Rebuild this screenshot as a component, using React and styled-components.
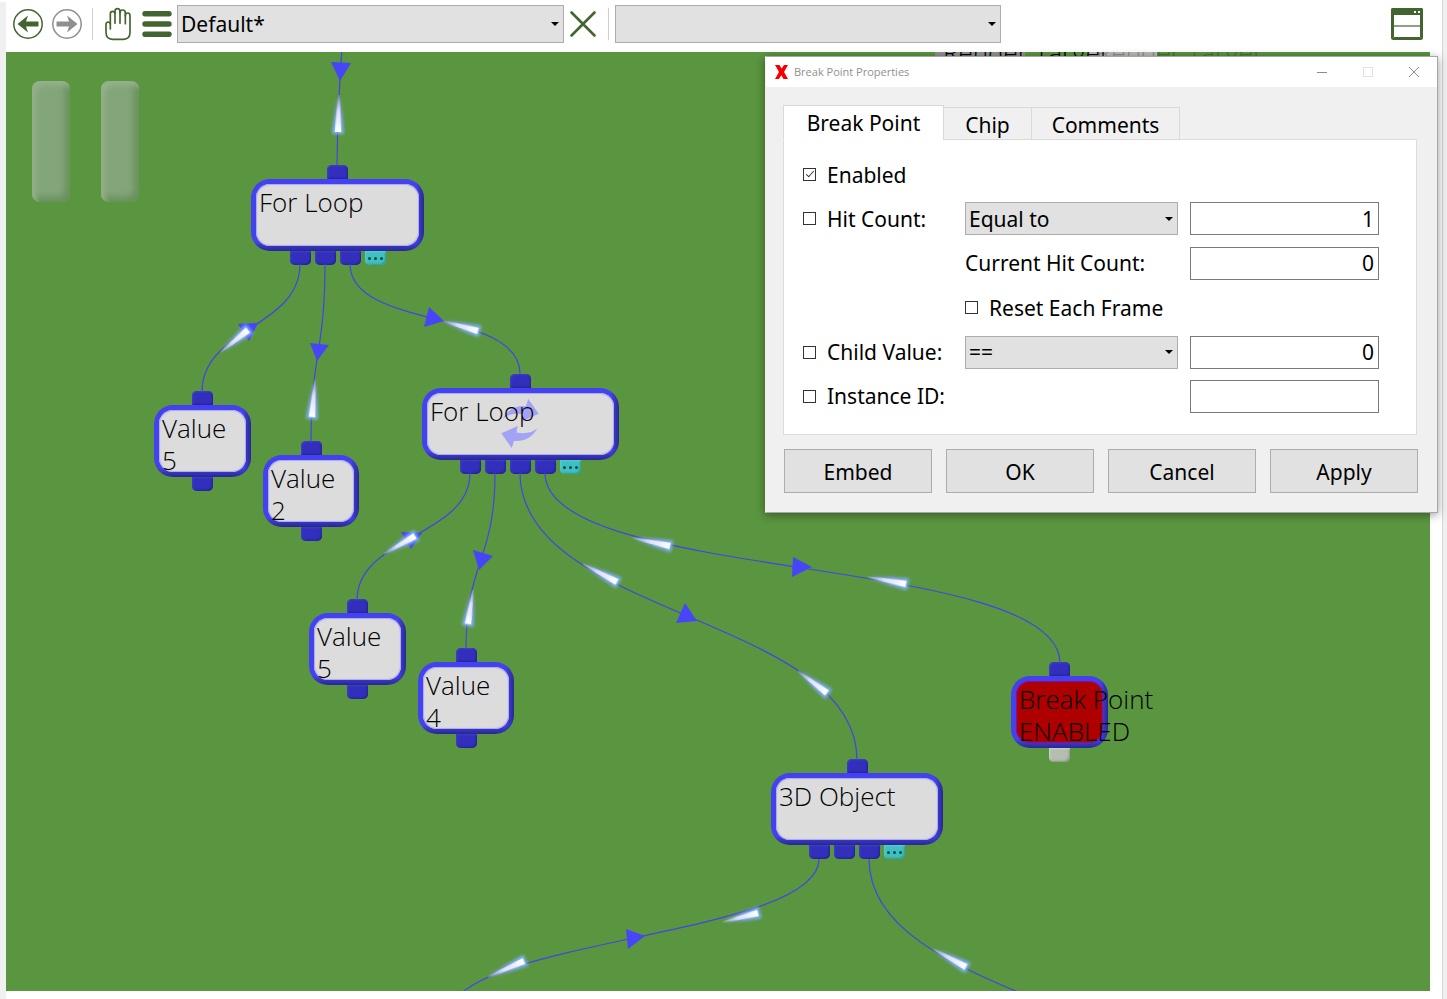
import React from "react";
import styled, { createGlobalStyle } from "styled-components";

const uiFont = `"Noto Sans", Tahoma, "DejaVu Sans Condensed", sans-serif`;
const nodeFont = `"Segoe UI", "Open Sans", "Noto Sans", sans-serif`;

const GlobalStyle = createGlobalStyle`
  *, *::before, *::after { box-sizing: border-box; }
  body { margin: 0; background: #fff; color: #000; font-family: ${uiFont}; }
`;

/* ---------- page frame ---------- */

const Page = styled.div`
  display: flex;
  min-height: 100vh;
  position: relative;
  overflow: hidden;
`;
const LeftEdge = styled.div`
  flex: none;
  width: 6px;
  margin-top: 2px;
  background: #f0f0f0;
`;
const RightEdge = styled.div`
  flex: none;
  width: 5px;
  border-left: 1px solid #d4d4d4;
  background: #f0f0f0;
`;
const Workspace = styled.main`
  flex: 1;
  min-width: 0;
  display: flex;
  flex-direction: column;
  padding: 0 12px 8px 0;
`;

/* ---------- toolbar ---------- */

const Toolbar = styled.header`
  flex: none;
  display: flex;
  align-items: center;
  height: 52px;
  padding: 0 7px 4px 6px;
`;
const IconButton = styled.button`
  flex: none;
  display: flex;
  align-items: center;
  justify-content: center;
  width: ${(p) => p.$width}px;
  height: 40px;
  padding: 0;
  border: 0;
  background: none;
  color: ${(p) => (p.$muted ? "#8f8f8f" : "#42642f")};
`;
const IconPair = styled.div`
  display: flex;
  gap: 4px;
`;
const Divider = styled.span`
  flex: none;
  width: 1px;
  height: 32px;
  margin: 0 ${(p) => p.$gapRight}px 0 ${(p) => p.$gapLeft}px;
  background: #d0d0d0;
`;
const Spacer = styled.div`
  flex: 1;
`;
const SelectBox = styled.div`
  position: relative;
  width: ${(p) => p.$width};
  height: ${(p) => p.$height}px;
`;
const NativeSelect = styled.select`
  appearance: none;
  display: block;
  width: 100%;
  height: 100%;
  padding: 0 24px 0 3px;
  border: 1px solid #adadad;
  border-radius: 0;
  background: #e1e1e1;
  color: #000;
  font: 21px ${uiFont};
`;
const SelectArrow = styled.svg`
  position: absolute;
  right: 5px;
  top: 50%;
  margin-top: -2px;
  pointer-events: none;
`;

function Select({ width, height, label, options }) {
  return (
    <SelectBox $width={width} $height={height}>
      <NativeSelect aria-label={label}>
        {options.map((o) => (
          <option key={o}>{o}</option>
        ))}
      </NativeSelect>
      <SelectArrow width="8" height="4" viewBox="0 0 8 4">
        <path d="M0 0H8L4 4Z" fill="#000" />
      </SelectArrow>
    </SelectBox>
  );
}

const CircleArrow = ({ flip }) => (
  <svg width="32" height="32" viewBox="0 0 32 32">
    <circle cx="16" cy="16" r="14.2" fill="none" stroke="currentColor" strokeWidth="1.5" />
    <path
      transform={flip ? "matrix(-1 0 0 1 32 0)" : undefined}
      d="M5.500 16L16 7.500L14 13.500H26.500V18.500H14L16 24.500Z"
      fill="currentColor"
    />
  </svg>
);
const HandIcon = () => (
  <svg width="28" height="34" viewBox="312 21 84 102" fill="none" stroke="currentColor" strokeWidth="5" strokeLinecap="round" strokeLinejoin="round">
    <path d="M331 87V73Q331 66 324.500 66Q318 66 318 74V97Q318 118 338 118H370Q390 118 390 97V47Q390 39 383 39Q376 39 376 46V71" />
    <path d="M331 72V41Q331 34 338 34Q345 34 345 41V70" />
    <path d="M345 40V34Q345 26 352.500 26Q360 26 360 34V70" />
    <path d="M360 38Q360 30 368 30Q376 30 376 38V48" />
  </svg>
);
const MenuIcon = () => (
  <svg width="30" height="28" viewBox="0 0 30 28" stroke="currentColor" strokeWidth="5.400" strokeLinecap="round">
    <path d="M3 3.700H27M3 14H27M3 24.300H27" />
  </svg>
);
const CrossIcon = () => (
  <svg width="28" height="28" viewBox="0 0 28 28" stroke="currentColor" strokeWidth="2.600" strokeLinecap="round">
    <path d="M2.500 2.500L25.500 25.500M25.500 2.500L2.500 25.500" />
  </svg>
);
const WindowIcon = () => (
  <svg width="32" height="32" viewBox="0 0 32 32">
    <rect x="1" y="1" width="30" height="30" rx="1.500" fill="#fff" stroke="currentColor" strokeWidth="2" />
    <rect x="0" y="0" width="32" height="7" rx="1.500" fill="currentColor" />
    <path d="M2.500 7V29.500H29.500V7" fill="none" stroke="currentColor" strokeWidth="1" />
    <path d="M3 18H29" stroke="#8ba37f" strokeWidth="2" />
    <path d="M23 3h2v2h-2zM27 3h2v2h-2z" fill="#fff" />
  </svg>
);

/* ---------- graph canvas ---------- */

const Canvas = styled.section`
  position: relative;
  flex: 1;
  overflow: hidden;
  background: #5a953f;
`;
const Wires = styled.svg`
  position: absolute;
  inset: 0;
  width: 100%;
  height: 100%;
`;
const PauseMark = styled.div`
  position: absolute;
  left: 26px;
  top: 29px;
  display: flex;
  gap: 31px;
`;
const PauseBar = styled.span`
  width: 38px;
  height: 121px;
  border-radius: 8px;
  background: #83a57a;
  box-shadow: inset 4px 5px 5px #94b089, inset -5px -5px 6px #69915c;
`;
const Node = styled.div`
  position: absolute;
  left: ${(p) => p.$x}px;
  top: ${(p) => p.$y}px;
  width: ${(p) => p.$width}px;
  display: flex;
  flex-direction: column;
  align-items: center;
`;
const portTones = {
  blue: ["#322fbd", "#4040c8", "#23238c"],
  teal: ["#3fbfc0", "#55d0d0", "#2e9796"],
  gray: ["#b4bdb0", "#ccd2c8", "#86947f"],
};
const Port = styled.span`
  display: flex;
  align-items: center;
  justify-content: center;
  gap: 3px;
  width: 21px;
  height: 14px;
  border-radius: ${(p) => (p.$top ? "5px 5px 0 0" : "0 0 5px 5px")};
  background: ${(p) => portTones[p.$tone][0]};
  box-shadow: inset 1px 1px 2px ${(p) => portTones[p.$tone][1]},
    inset -1px -1px 2px ${(p) => portTones[p.$tone][2]};
`;
const Dot = styled.i`
  width: 3px;
  height: 3px;
  border-radius: 50%;
  background: #0c4a50;
`;
const PortRow = styled.div`
  display: flex;
  gap: 4px;
`;
const bodyTones = {
  normal: ["#dcdcdc", "#a9a9ee"],
  alert: ["#ae0000", "#8a10a0"],
};
const NodeBody = styled.div`
  position: relative;
  width: 100%;
  height: 72px;
  padding: 2px 3px;
  border: 5px solid transparent;
  border-radius: 19px;
  background:
    linear-gradient(${(p) => bodyTones[p.$tone][0]} 0 0) padding-box,
    linear-gradient(to left, #29288f, #2f2eb000 8px) border-box,
    linear-gradient(to top, #29288f, #4442f0 9px) border-box;
  box-shadow: inset 0 0 1px 1px ${(p) => bodyTones[p.$tone][1]};
  font: 300 26px/32px ${nodeFont};
  white-space: pre;
`;
const NodeLabel = styled.span`
  position: relative;
`;
const IdleBody = styled.div`
  width: 100%;
  height: 72px;
  padding: 5px 8px;
  border-radius: 19px 19px 4px 4px;
  background: ${(p) => p.$fill};
  color: ${(p) => p.$ink};
  font: 300 26px/32px ${nodeFont};
  white-space: pre;
`;
const LoopMark = styled.svg`
  position: absolute;
  left: 73px;
  top: 5px;
`;

const nodes = [
  { x: 245, y: 113, width: 173, label: "For Loop", ports: ["blue", "blue", "blue", "teal"] },
  { x: 416, y: 322, width: 197, label: "For Loop", loop: true, ports: ["blue", "blue", "blue", "blue", "teal"] },
  { x: 148, y: 339, width: 97, label: "Value\n5", ports: ["blue"] },
  { x: 257, y: 389, width: 96, label: "Value\n2", ports: ["blue"] },
  { x: 303, y: 547, width: 97, label: "Value\n5", ports: ["blue"] },
  { x: 412, y: 596, width: 96, label: "Value\n4", ports: ["blue"] },
  { x: 1005, y: 610, width: 97, label: "Break Point\nENABLED", tone: "alert", ports: ["gray"] },
  { x: 765, y: 707, width: 172, label: "3D Object", ports: ["blue", "blue", "blue", "teal"] },
];

/* start x, start y, end x, end y, handle length as a share of the drop */
const wires = [
  [338, -77, 331, 113, 0.5],
  [294, 212, 196, 340, 0.5],
  [319, 212, 305, 390, 0.5],
  [344, 212, 514, 322, 0.6],
  [464, 421, 351, 548, 0.5],
  [489, 421, 460, 597, 0.5],
  [514, 421, 851, 708, 0.5],
  [539, 421, 1054, 611, 0.58],
  [813, 807, 442, 965, 0.5],
  [863, 807, 1193, 1087, 0.5],
];
const arrows = [
  "325,10 345,11 334,29",
  "232,272 252,271 243,289",
  "304,291 323,293 311,309",
  "423,255 418,275 438,269",
  "395,480 416,481 405,497",
  "467,498 487,504 473,518",
  "679,551 670,571 691,569",
  "787,505 786,525 806,515",
  "620,877 622,897 639,884",
];
/* tail x, tail y, head x, head y */
const pulses = [
  [333, 43, 332, 80],
  [215, 300, 242, 278],
  [309, 328, 306, 365],
  [437, 269, 472, 279],
  [378, 502, 409, 484],
  [467, 538, 462, 572],
  [627, 486, 664, 494],
  [862, 525, 900, 532],
  [577, 512, 611, 530],
  [792, 619, 821, 641],
  [717, 870, 752, 861],
  [482, 925, 518, 909],
  [927, 897, 960, 915],
];

function Pulse({ tx, ty, hx, hy }) {
  const length = Math.hypot(hx - tx, hy - ty);
  const angle = (Math.atan2(hy - ty, hx - tx) * 180) / Math.PI;
  return (
    <g transform={`translate(${tx} ${ty}) rotate(${angle})`}>
      <path d={`M4 -2L${length + 2} -6V6L4 2Z`} fill="url(#pulseGlow)" filter="url(#soft)" />
      <path d={`M0 -0.700L${length} -3.200V3.200L0 0.700Z`} fill="url(#pulseCore)" filter="url(#edge)" />
    </g>
  );
}

function Graph() {
  return (
    <Canvas aria-label="Chip graph">
      <PauseMark aria-hidden="true">
        <PauseBar />
        <PauseBar />
      </PauseMark>
      <Node $x={1082} $y={-35} $width={69}>
        <Port $top $tone="gray" />
        <IdleBody $fill="#b7bcb5" $ink="rgba(0, 0, 0, 0.250)">Render Target</IdleBody>
      </Node>
      <Node $x={929} $y={-35} $width={90}>
        <Port $top $tone="gray" />
        <IdleBody $fill="#8f938d" $ink="#000">Render Target</IdleBody>
      </Node>
      {nodes.map((n, i) => (
        <Node key={i} $x={n.x} $y={n.y} $width={n.width}>
          <Port $top $tone="blue" />
          <NodeBody $tone={n.tone || "normal"}>
            {n.loop && (
              <LoopMark width="40" height="52" viewBox="0 0 40 52" fill="#a3a2f5">
                <path id="loopHalf" d="M1.300 35.300L17.700 28L16.500 34.500Q30 37 37.300 30.300Q30 44 14 43L11.700 50Z" />
                <use href="#loopHalf" transform="rotate(180 20 25.500)" />
              </LoopMark>
            )}
            <NodeLabel>{n.label}</NodeLabel>
          </NodeBody>
          <PortRow>
            {n.ports.map((tone, j) => (
              <Port key={j} $tone={tone}>
                {tone === "teal" && (
                  <>
                    <Dot />
                    <Dot />
                    <Dot />
                  </>
                )}
              </Port>
            ))}
          </PortRow>
        </Node>
      ))}
      <Wires aria-hidden="true">
        <defs>
          <linearGradient id="pulseCore">
            <stop offset="0" stopColor="#b8c4ff" stopOpacity="0.3" />
            <stop offset="0.4" stopColor="#e0e0ff" stopOpacity="0.950" />
            <stop offset="1" stopColor="#fff" />
          </linearGradient>
          <linearGradient id="pulseGlow">
            <stop offset="0" stopColor="#7f9cf8" stopOpacity="0.3" />
            <stop offset="0.5" stopColor="#7fa4ff" />
            <stop offset="1" stopColor="#7fb4ff" />
          </linearGradient>
          <filter id="soft" x="-30%" y="-150%" width="160%" height="400%" colorInterpolationFilters="sRGB">
            <feGaussianBlur stdDeviation="1.600" />
          </filter>
          <filter id="edge" x="-20%" y="-50%" width="140%" height="200%" colorInterpolationFilters="sRGB">
            <feGaussianBlur stdDeviation="0.500" />
          </filter>
        </defs>
        {wires.map(([x1, y1, x2, y2, share], i) => {
          const handle = (y2 - y1) * share;
          return (
            <path
              key={i}
              d={`M${x1} ${y1}C${x1} ${y1 + handle} ${x2} ${y2 - handle} ${x2} ${y2}`}
              fill="none"
              stroke="#4444e8"
              strokeWidth="1.200"
            />
          );
        })}
        {arrows.map((points) => (
          <polygon key={points} points={points} fill="#4646f8" />
        ))}
        {pulses.map(([tx, ty, hx, hy], i) => (
          <Pulse key={i} tx={tx} ty={ty} hx={hx} hy={hy} />
        ))}
      </Wires>
    </Canvas>
  );
}

/* ---------- properties dialog ---------- */

const Dialog = styled.section`
  position: absolute;
  right: 9px;
  top: 56px;
  width: 673px;
  border: 1px solid #a6a6a6;
  border-left-color: #efefef;
  background: #f0f0f0;
  box-shadow: 0 2px 9px rgba(0, 0, 0, 0.4);
`;
const TitleBar = styled.div`
  display: flex;
  align-items: center;
  height: 30px;
  padding: 0 0 1px 8px;
  background: #fff;
`;
const Title = styled.h1`
  flex: 1;
  margin: 0 0 0 5px;
  color: #909090;
  font: 400 11px ${nodeFont};
`;
const CaptionButton = styled.button`
  display: flex;
  align-items: center;
  justify-content: center;
  width: 46px;
  height: 28px;
  padding: 0;
  border: 0;
  background: none;
  color: ${(p) => (p.$faint ? "#e2e2e2" : "#8c8c8c")};
`;
const DialogContent = styled.div`
  padding: 18px 19px 19px 17px;
`;
const TabList = styled.div`
  display: flex;
  align-items: flex-end;
  height: 35px;
  margin-bottom: -1px;
`;
const Tab = styled.button`
  position: relative;
  width: ${(p) => p.$width}px;
  height: ${(p) => (p.$active ? 35 : 33)}px;
  padding: ${(p) => (p.$active ? 0 : 2)}px 0 0;
  margin: 0 0 0 ${(p) => (p.$active ? 0 : -1)}px;
  border: 1px solid #d9d9d9;
  border-bottom-color: ${(p) => (p.$active ? "#fff" : "#d9d9d9")};
  background: ${(p) => (p.$active ? "#fff" : "#f0f0f0")};
  color: #000;
  font: 21px/28px ${uiFont};
`;
const Panel = styled.div`
  display: grid;
  grid-template-columns: 150px 213px 189px;
  grid-template-rows: repeat(6, 33px);
  column-gap: 12px;
  align-content: space-between;
  height: 296px;
  margin-right: 1px;
  padding: 18px 0 21px 19px;
  border: 1px solid #dcdcdc;
  background: #fff;
`;
const Check = styled.label`
  display: flex;
  align-items: center;
  gap: 11px;
  grid-column: ${(p) => p.$column || 1};
  font: 21px/32px ${uiFont};
  white-space: nowrap;
`;
const CheckInput = styled.input`
  appearance: none;
  position: relative;
  flex: none;
  width: 13px;
  height: 13px;
  margin: 0;
  border: 1px solid #333;
  background: #fff;
  &:checked::after {
    content: "";
    position: absolute;
    left: 4px;
    top: 0;
    width: 4px;
    height: 8px;
    border: solid #333;
    border-width: 0 1px 1px 0;
    transform: rotate(42deg);
  }
`;
const FieldLabel = styled.label`
  grid-column: 2;
  align-self: center;
  font: 21px/32px ${uiFont};
  white-space: nowrap;
`;
const NumberField = styled.input`
  grid-column: 3;
  width: 100%;
  height: 33px;
  padding: 0 4px;
  border: 1px solid #7a7a7a;
  border-radius: 0;
  background: #fff;
  color: #000;
  font: 21px ${uiFont};
  text-align: right;
`;
const ButtonRow = styled.div`
  display: grid;
  grid-template-columns: repeat(4, 1fr);
  gap: 14px;
  margin: 14px 0 0 1px;
`;
const PushButton = styled.button`
  height: 44px;
  padding: 2px 0 0;
  border: 1px solid #adadad;
  background: #e1e1e1;
  color: #000;
  font: 21px ${uiFont};
`;

function BreakPointDialog() {
  return (
    <Dialog role="dialog" aria-label="Break Point Properties">
      <TitleBar>
        <svg width="15" height="14" viewBox="0 0 15 14">
          <path d="M1 0H5.500L7.700 3.600L10 0H14L10 7L14 14H9.500L7.300 10.200L5 14H1L5 7Z" fill="#f80000" />
        </svg>
        <Title>Break Point Properties</Title>
        <CaptionButton aria-label="Minimize">
          <svg width="10" height="10" viewBox="0 0 10 10" stroke="currentColor"><path d="M0 5.500H10" /></svg>
        </CaptionButton>
        <CaptionButton aria-label="Maximize" $faint>
          <svg width="10" height="10" viewBox="0 0 10 10" stroke="currentColor" fill="none"><rect x="0.500" y="0.500" width="9" height="9" /></svg>
        </CaptionButton>
        <CaptionButton aria-label="Close">
          <svg width="10" height="10" viewBox="0 0 10 10" stroke="currentColor"><path d="M0 0L10 10M10 0L0 10" /></svg>
        </CaptionButton>
      </TitleBar>
      <DialogContent>
        <TabList role="tablist">
          <Tab role="tab" aria-selected="true" $active $width={161}>Break Point</Tab>
          <Tab role="tab" aria-selected="false" $width={89}>Chip</Tab>
          <Tab role="tab" aria-selected="false" $width={149}>Comments</Tab>
        </TabList>
        <Panel role="tabpanel">
          <Check><CheckInput type="checkbox" defaultChecked />Enabled</Check>
          <Check><CheckInput type="checkbox" />Hit Count:</Check>
          <Select width="100%" height={33} label="Hit count comparison" options={["Equal to"]} />
          <NumberField aria-label="Hit count" defaultValue="1" />
          <FieldLabel htmlFor="current-hits">Current Hit Count:</FieldLabel>
          <NumberField id="current-hits" defaultValue="0" />
          <Check $column={2}><CheckInput type="checkbox" />Reset Each Frame</Check>
          <Check><CheckInput type="checkbox" />Child Value:</Check>
          <Select width="100%" height={33} label="Child value comparison" options={["=="]} />
          <NumberField aria-label="Child value" defaultValue="0" />
          <Check><CheckInput type="checkbox" />Instance ID:</Check>
          <NumberField aria-label="Instance ID" />
        </Panel>
        <ButtonRow>
          {["Embed", "OK", "Cancel", "Apply"].map((b) => (
            <PushButton key={b}>{b}</PushButton>
          ))}
        </ButtonRow>
      </DialogContent>
    </Dialog>
  );
}

export default function App() {
  return (
    <>
      <GlobalStyle />
      <Page>
        <LeftEdge />
        <Workspace>
          <Toolbar>
            <IconButton $width={32} aria-label="Back"><CircleArrow /></IconButton>
            <IconButton $width={46} $muted aria-label="Forward"><CircleArrow flip /></IconButton>
            <Divider $gapLeft={2} $gapRight={11} />
            <IconPair>
              <IconButton $width={28} aria-label="Pan"><HandIcon /></IconButton>
              <IconButton $width={41} aria-label="Menu"><MenuIcon /></IconButton>
            </IconPair>
            <Select width="387px" height={38} label="View" options={["Default*"]} />
            <IconButton $width={38} aria-label="Clear"><CrossIcon /></IconButton>
            <Divider $gapLeft={6} $gapRight={6} />
            <Select width="386px" height={38} label="Search" options={[""]} />
            <Spacer />
            <IconButton $width={32} aria-label="Window layout"><WindowIcon /></IconButton>
          </Toolbar>
          <Graph />
        </Workspace>
        <RightEdge />
        <BreakPointDialog />
      </Page>
    </>
  );
}
